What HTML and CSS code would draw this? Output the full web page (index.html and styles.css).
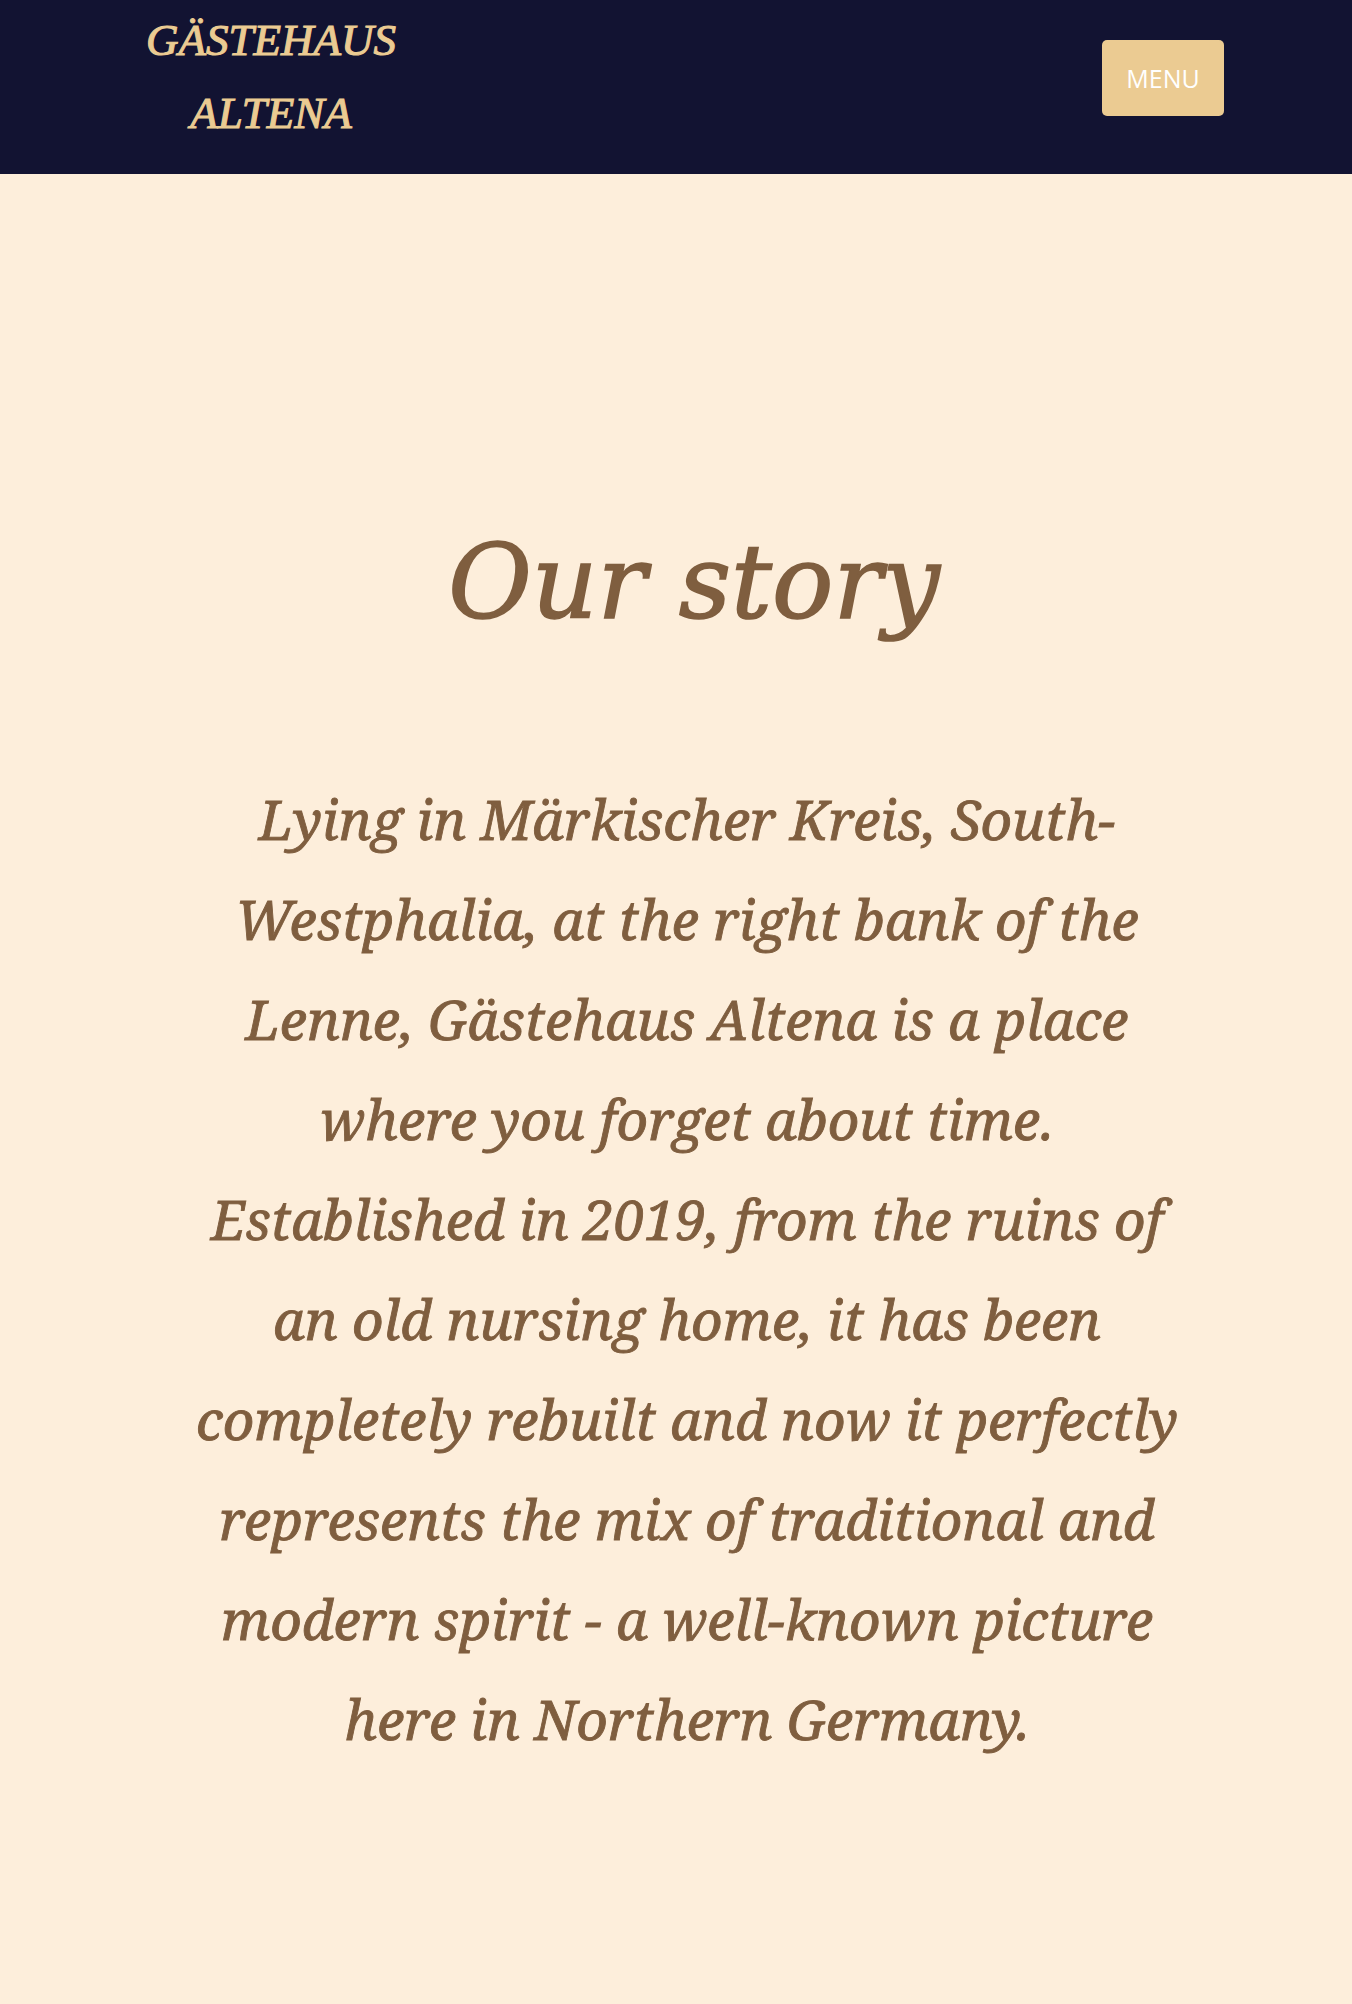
FILE: index.html
```html
<!DOCTYPE html>
<html lang="en">
<head>
<meta charset="utf-8">
<title>Gästehaus Altena – Our story</title>
<link rel="stylesheet" href="styles.css">
</head>
<body>
<header class="site-header">
  <a class="logo" href="#">GÄSTEHAUS<br>ALTENA</a>
  <button class="menu-btn" type="button">MENU</button>
</header>
<main class="story">
  <div class="story-inner">
    <h1 class="story-title">Our story</h1>
    <p class="story-text">Lying in Märkischer Kreis, South-Westphalia, at the right bank of the Lenne, Gästehaus Altena is a place where you forget about time. Established in 2019, from the ruins of an old nursing home, it has been completely rebuilt and now it perfectly represents the mix of traditional and modern spirit - a well-known picture here in Northern Germany.</p>
  </div>
</main>
</body>
</html>
```
FILE: styles.css
```css
html, body {
  margin: 0;
  padding: 0;
}

body {
  background: #fdeedb;
  font-family: "Noto Serif", "DejaVu Serif", serif;
  min-height: 2004px;
}

.site-header {
  height: 174px;
  box-sizing: border-box;
  background: #121332;
  display: flex;
  justify-content: space-between;
  align-items: flex-start;
  padding: 0 128px 0 111px;
}

.logo {
  display: block;
  width: 320px;
  margin-top: 4px;
  text-align: center;
  text-decoration: none;
  color: #ebcb92;
  font-family: "Liberation Serif", "Times New Roman", serif;
  font-style: italic;
  font-weight: 400;
  font-size: 45px;
  line-height: 73px;
  -webkit-text-stroke: 1.1px #ebcb92;
}

.menu-btn {
  margin-top: 40px;
  width: 122px;
  height: 76px;
  border: 0;
  border-radius: 5px;
  background: #ebcb92;
  color: #ffffff;
  font-family: "Open Sans", "Noto Sans", sans-serif;
  font-size: 25px;
  font-weight: 400;
  padding: 0;
  cursor: pointer;
}

.story {
  padding: 349px 0 0 22px;
}

.story-inner {
  width: 1000px;
  margin: 0 auto;
  text-align: center;
  color: #7f5e3f;
}

.story-title {
  margin: 0;
  padding-left: 14px;
  font-family: "DejaVu Serif", serif;
  font-style: italic;
  font-weight: 400;
  font-size: 102px;
  line-height: 120px;
  -webkit-text-stroke: 1.6px #7f5e3f;
}

.story-text {
  margin: 126px 0 0;
  font-family: "Noto Serif", "DejaVu Serif", serif;
  font-style: italic;
  font-weight: 400;
  font-size: 55px;
  line-height: 100px;
  -webkit-text-stroke: 0.9px #7f5e3f;
}
```
